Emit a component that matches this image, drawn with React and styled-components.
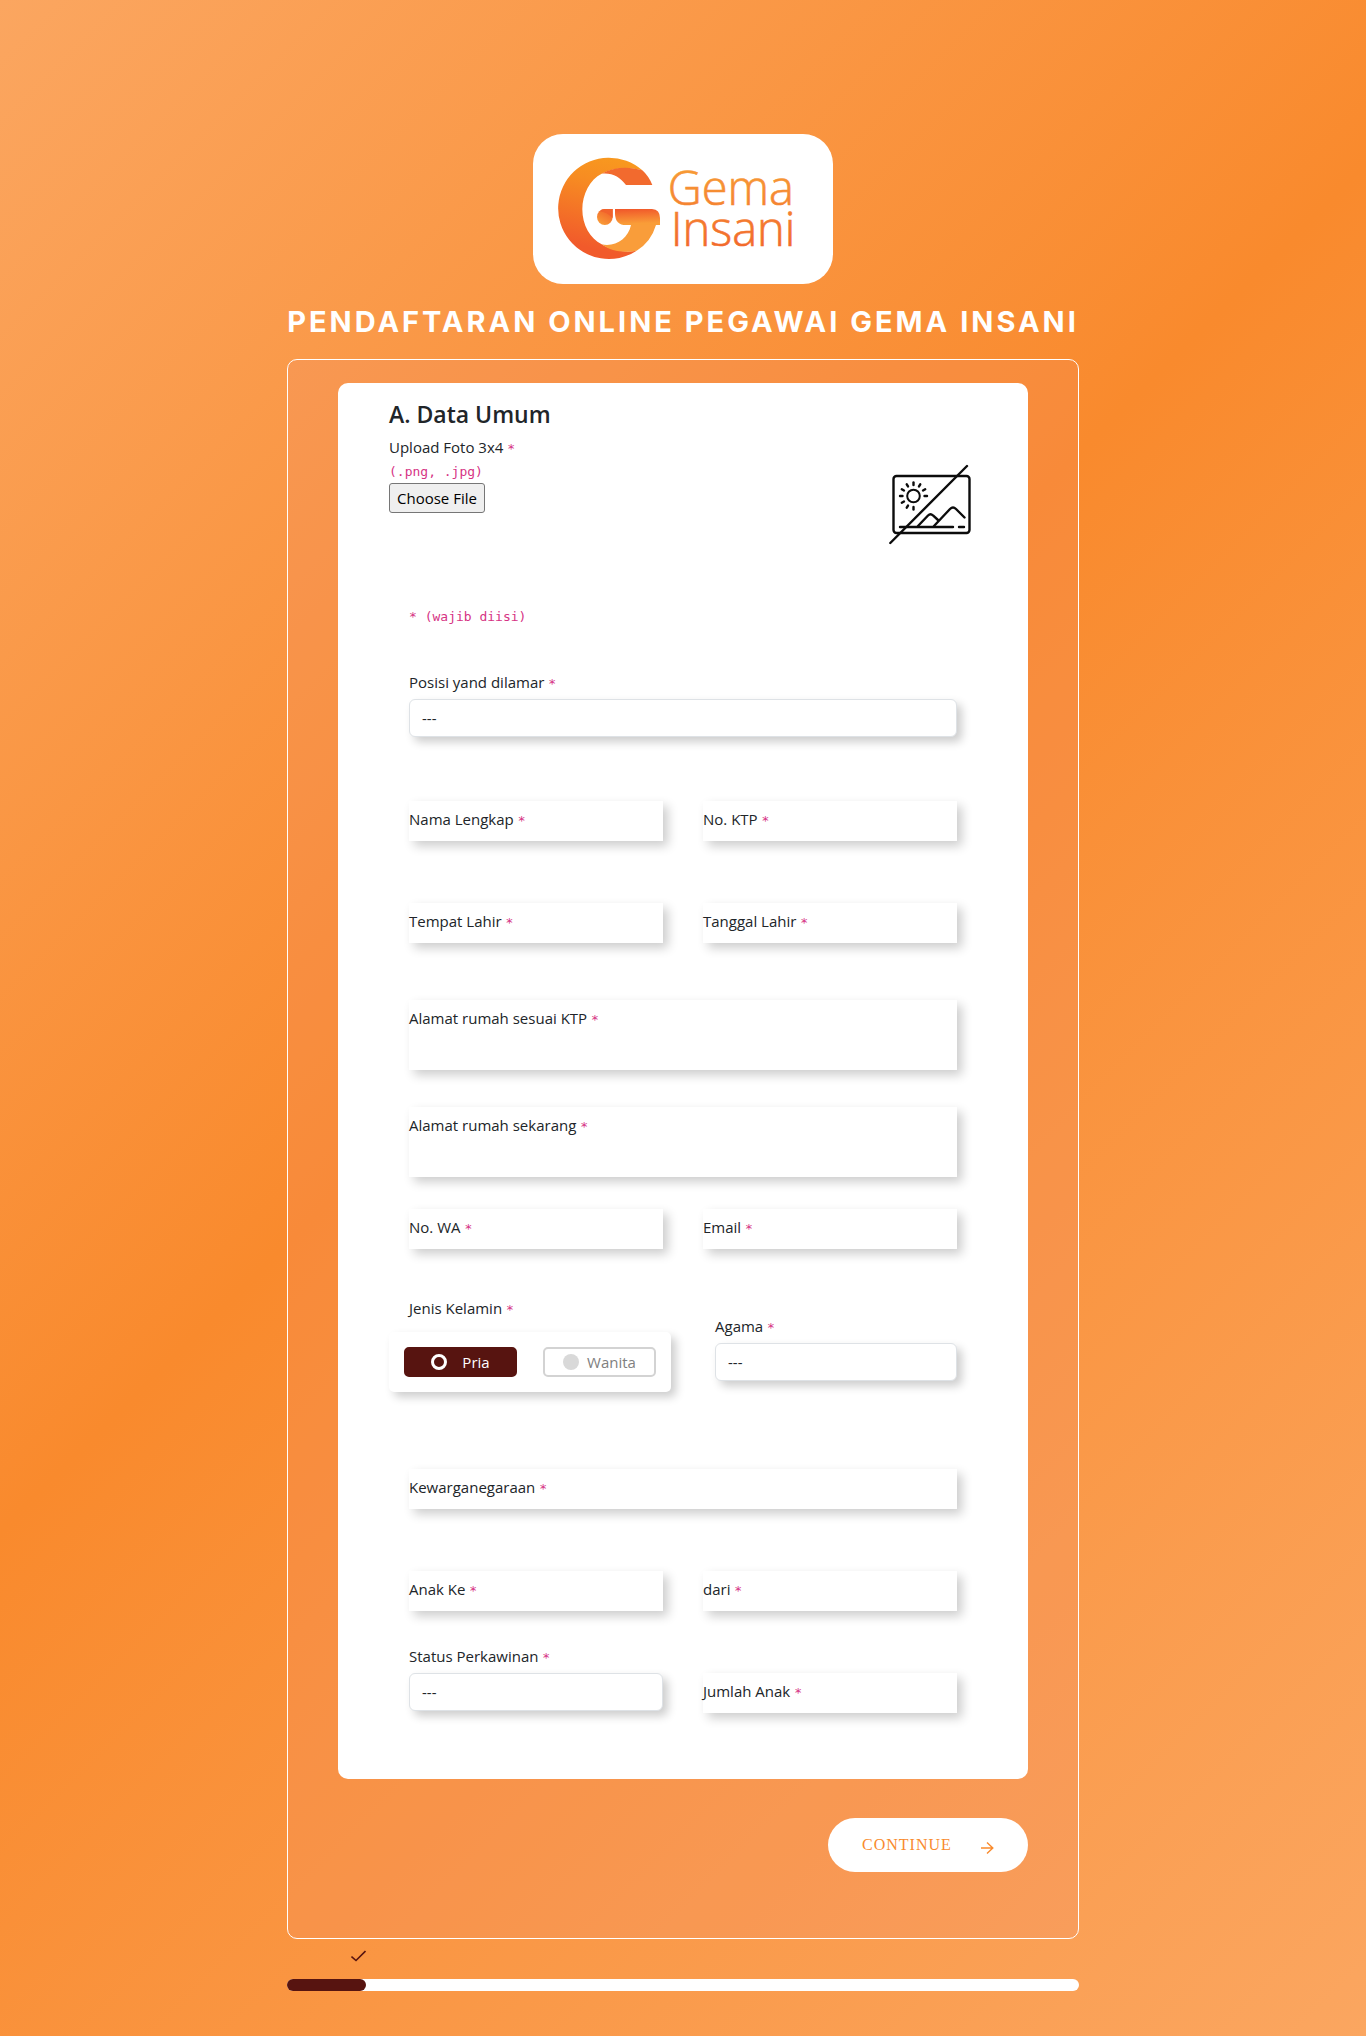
import React, { useId, useState } from "react";
import styled, { createGlobalStyle, css } from "styled-components";

const GlobalStyle = createGlobalStyle`
  *, *::before, *::after { box-sizing: border-box; }
  body {
    margin: 0;
    font-family: "Open Sans", "Noto Sans", sans-serif;
    font-size: 15px;
    line-height: 24px;
    color: #212529;
  }
  h1, h2, p { margin: 0; }
`;

const softShadow = css`
  box-shadow: 5px 5px 10px rgba(0, 0, 0, 0.2);
`;

const Page = styled.div`
  min-height: 100vh;
  display: flex;
  flex-direction: column;
  align-items: center;
  padding: 134px 16px 44px;
  background: linear-gradient(135deg, #fba660 0%, #f98a2d 45%, #fba660 100%);
`;

const LogoPlate = styled.div`
  width: 300px;
  height: 150px;
  border-radius: 30px;
  background: #fff;
  overflow: hidden;

  svg { display: block; }
`;

const Title = styled.h1`
  margin-top: 16px;
  font-family: Inter, "Open Sans", sans-serif;
  font-size: 29px;
  line-height: 44px;
  font-weight: 700;
  letter-spacing: 3px;
  text-align: center;
  color: #fff;
`;

const Container = styled.main`
  width: 100%;
  max-width: 792px;
`;

const Panel = styled.form`
  margin-top: 15px;
  padding: 23px 50px 66px;
  border: 1px solid #fff;
  border-radius: 10px;
  background: rgba(241, 142, 125, 0.15);
`;

const Card = styled.section`
  padding: 15px 51px 66px;
  border-radius: 10px;
  background: #fff;
`;

const CardTitle = styled.h2`
  margin-bottom: 5px;
  font-size: 23px;
  line-height: 32px;
  font-weight: 600;
`;

const Upload = styled.div`
  display: flex;
  justify-content: space-between;
  align-items: flex-start;
`;

const UploadText = styled.div`
  display: flex;
  flex-direction: column;
  align-items: flex-start;
`;

const codeText = css`
  font-family: "DejaVu Sans Mono", monospace;
  font-size: 13px;
  color: #d63384;
`;

const Hint = styled.p`
  ${codeText}
  padding-top: 2px;
  line-height: 22px;
`;

const Required = styled.code`
  ${codeText}
  line-height: 1;
`;

const FileButton = styled.button`
  height: 30px;
  padding: 0 7px;
  border: 1px solid #767676;
  border-radius: 3px;
  background: #efefef;
  color: #000;
  font: inherit;
`;

const Photo = styled.div`
  padding: 29px 6px 0 0;

  svg { display: block; }
`;

const Fields = styled.div`
  padding: 58px 20px 0;
`;

const Row = styled.div`
  display: grid;
  grid-template-columns: ${(p) => (p.$split ? "1fr 1fr" : "1fr")};
  column-gap: 40px;
  align-items: start;
  margin-top: ${(p) => p.$gap}px;
`;

const Stack = styled.div`
  display: grid;
  height: ${(p) => (p.$tall ? 70 : 40)}px;
  margin-top: ${(p) => (p.$level ? 29 : 0)}px;
  background: #fff;
  ${softShadow}

  > * { grid-area: 1 / 1; }
`;

const inputLook = css`
  width: 100%;
  height: 100%;
  padding: 8px 0;
  border: 0;
  background: transparent;
  color: inherit;
  font: inherit;
  resize: none;
  outline: none;
`;

const Input = styled.input`
  ${inputLook}
`;

const TextArea = styled.textarea`
  ${inputLook}
`;

const FloatingLabel = styled.label`
  padding-top: 6px;
  pointer-events: none;
`;

const FieldLabel = styled.label`
  display: block;
  margin-bottom: 5px;
`;

const Select = styled.select`
  display: block;
  width: 100%;
  height: 38px;
  padding: 0 12px;
  border: 1px solid #dee2e6;
  border-radius: 6px;
  background: #fff;
  color: #212529;
  font: inherit;
  appearance: none;
  ${softShadow}
`;

const GenderRow = styled.div`
  display: grid;
  grid-template-columns: 1fr 242px;
  column-gap: 44px;
  margin-top: 47px;
`;

const GenderSet = styled.fieldset`
  min-width: 0;
  margin: 0 0 0 -20px;
  padding: 0;
  border: 0;
`;

const GenderLegend = styled.legend`
  margin-bottom: 12px;
  padding: 0 0 0 20px;
`;

const GenderBox = styled.div`
  display: flex;
  gap: 26px;
  padding: 15px;
  border-radius: 5px;
  background: #fff;
  ${softShadow}
`;

const GenderOption = styled.label`
  display: flex;
  flex: 1;
  align-items: center;
  justify-content: center;
  gap: ${(p) => (p.$on ? 15 : 8)}px;
  height: 30px;
  border: 2px solid ${(p) => (p.$on ? "#571410" : "#d3d3d3")};
  border-radius: 5px;
  background: ${(p) => (p.$on ? "#571410" : "#fff")};
  color: ${(p) => (p.$on ? "#fff" : "#808080")};
  cursor: pointer;
`;

const Radio = styled.input`
  appearance: none;
  width: 16px;
  height: 16px;
  margin: 0;
  border-radius: 50%;
  background: #d9d9d9;

  &:checked {
    border: 3px solid #fff;
    background: #571410;
  }
`;

const Religion = styled.div`
  padding-top: 18px;
`;

const Actions = styled.div`
  display: flex;
  justify-content: flex-end;
  margin-top: 39px;
`;

const Continue = styled.button`
  display: flex;
  align-items: center;
  justify-content: space-between;
  width: 200px;
  height: 54px;
  padding: 0 34px;
  border: 0;
  border-radius: 27px;
  background: #fff;
  color: #f98b2d;
  font-family: "Liberation Serif", serif;
  font-size: 16px;
  line-height: 24px;
  letter-spacing: 1px;

  svg { margin-top: 6px; }
`;

const Progress = styled.div`
  margin-top: 4px;
`;

const ProgressMark = styled.div`
  display: flex;
  justify-content: flex-end;
  width: ${(p) => p.$value}%;
  height: 36px;
  padding-top: 7px;
`;

const Track = styled.div`
  height: 12px;
  border-radius: 6px;
  background: #fff;
`;

const Fill = styled.div`
  width: ${(p) => p.$value}%;
  height: 100%;
  border-radius: 6px;
  background: #571410;
`;

function Logo() {
  return (
    <svg width="300" height="150" viewBox="39 42 900 450" role="img" aria-label="Gema Insani">
      <defs>
        <linearGradient id="ring" x1="0.6" y1="0" x2="0.4" y2="1">
          <stop offset="0" stopColor="#f8981f" />
          <stop offset="0.25" stopColor="#f78c22" />
          <stop offset="0.9" stopColor="#f15a2b" />
        </linearGradient>
        <linearGradient id="bar" x1="0.45" y1="0" x2="0.55" y2="1">
          <stop offset="0" stopColor="#f1592a" />
          <stop offset="0.9" stopColor="#f99d38" />
        </linearGradient>
        <linearGradient id="dot" x1="0.7" y1="0.2" x2="0.3" y2="1">
          <stop offset="0" stopColor="#f26a2c" />
          <stop offset="1" stopColor="#f99d38" />
        </linearGradient>
        <linearGradient id="word" gradientUnits="userSpaceOnUse" x1="0" y1="150" x2="0" y2="380">
          <stop offset="0" stopColor="#f79a35" />
          <stop offset="1" stopColor="#f26a2b" />
        </linearGradient>
      </defs>
      <path
        d="M367 151 A152 152 0 1 0 350 392 C315 398 275 392 245 373 C210 355 187 315 187 268 C187 222 210 178 245 161 C280 143 325 140 367 151Z"
        fill="url(#ring)"
      />
      <path d="M245 161 C280 141 325 138 367 151 Q386 168 397 195 H318 C300 171 278 158 245 161Z" fill="#f26a2e" />
      <path d="M245 373 C285 382 325 356 333 315 H408 Q393 366 350 392 C315 399 275 396 245 373Z" fill="#f99d3a" />
      <path d="M285 267 H396 Q420 269 420 294 V315 H318 Q286 315 285 281Z" fill="url(#bar)" />
      <path d="M278 267 V291 A23.500 24 0 1 1 254.500 267Z" fill="url(#dot)" />
      <path d="M278 267 V294 Q260 276 239 274 Q245 267 255 267Z" fill="#f1622c" />
      <text fill="url(#word)" stroke="url(#word)" strokeWidth="2" fontFamily="Open Sans, sans-serif" fontWeight="300" fontSize="141">
        <tspan x="443" y="256">Gema</tspan>
        <tspan x="452" y="377">Insani</tspan>
      </text>
    </svg>
  );
}

function NoPhotoIcon() {
  const rays = [0, 30, 60, 90, 180, 210, 240, 270, 300, 330];
  return (
    <svg width="82" height="82" viewBox="0 0 82 82" fill="none" stroke="#0c0c0c" strokeWidth="2.400" strokeLinecap="round" role="img" aria-label="Belum ada foto">
      <rect x="4.500" y="12" width="76" height="57" rx="3" />
      <path d="M1.300 79 L78 2" />
      <circle cx="24.500" cy="32" r="6.300" strokeWidth="2" />
      {rays.map((a) => (
        <path key={a} d="M24.500 21 V18.500" transform={`rotate(${a} 24.500 32)`} />
      ))}
      <path d="M11 63 H64 M70 63 H75" />
      <path d="M29 62 L39 51.500 Q41.500 49 44 51.500 L49 56" />
      <path d="M45 62 L61 45 Q64 42 67 45 L75.500 53.500" />
    </svg>
  );
}

const Star = () => <Required>*</Required>;

function TextField({ label, tall, level, type = "text" }) {
  const id = useId();
  return (
    <Stack $tall={tall} $level={level}>
      {tall ? <TextArea id={id} /> : <Input id={id} type={type} />}
      <FloatingLabel htmlFor={id}>
        {label} <Star />
      </FloatingLabel>
    </Stack>
  );
}

function SelectField({ label, options }) {
  const id = useId();
  return (
    <div>
      <FieldLabel htmlFor={id}>
        {label} <Star />
      </FieldLabel>
      <Select id={id} defaultValue="">
        <option value="">---</option>
        {options.map((o) => (
          <option key={o}>{o}</option>
        ))}
      </Select>
    </div>
  );
}

export default function App() {
  const [gender, setGender] = useState("Pria");
  const progress = 10;

  return (
    <Page>
      <GlobalStyle />
      <LogoPlate>
        <Logo />
      </LogoPlate>
      <Title>PENDAFTARAN ONLINE PEGAWAI GEMA INSANI</Title>
      <Container>
        <Panel onSubmit={(e) => e.preventDefault()}>
          <Card>
            <CardTitle>A. Data Umum</CardTitle>
            <Upload>
              <UploadText>
                <label htmlFor="foto">
                  Upload Foto 3x4 <Star />
                </label>
                <Hint>(.png, .jpg)</Hint>
                <FileButton id="foto" type="button">Choose File</FileButton>
              </UploadText>
              <Photo>
                <NoPhotoIcon />
              </Photo>
            </Upload>
            <Fields>
              <Hint>* (wajib diisi)</Hint>
              <Row $gap={42}>
                <SelectField label="Posisi yand dilamar" options={[]} />
              </Row>
              <Row $gap={64} $split>
                <TextField label="Nama Lengkap" />
                <TextField label="No. KTP" />
              </Row>
              <Row $gap={62} $split>
                <TextField label="Tempat Lahir" />
                <TextField label="Tanggal Lahir" />
              </Row>
              <Row $gap={57}>
                <TextField label="Alamat rumah sesuai KTP" tall />
              </Row>
              <Row $gap={37}>
                <TextField label="Alamat rumah sekarang" tall />
              </Row>
              <Row $gap={32} $split>
                <TextField label="No. WA" type="tel" />
                <TextField label="Email" type="email" />
              </Row>
              <GenderRow>
                <GenderSet>
                  <GenderLegend>
                    Jenis Kelamin <Star />
                  </GenderLegend>
                  <GenderBox>
                    {["Pria", "Wanita"].map((g) => (
                      <GenderOption key={g} $on={gender === g}>
                        <Radio type="radio" name="gender" checked={gender === g} onChange={() => setGender(g)} />
                        {g}
                      </GenderOption>
                    ))}
                  </GenderBox>
                </GenderSet>
                <Religion>
                  <SelectField label="Agama" options={[]} />
                </Religion>
              </GenderRow>
              <Row $gap={77}>
                <TextField label="Kewarganegaraan" />
              </Row>
              <Row $gap={62} $split>
                <TextField label="Anak Ke" />
                <TextField label="dari" />
              </Row>
              <Row $gap={33} $split>
                <SelectField label="Status Perkawinan" options={[]} />
                <TextField label="Jumlah Anak" level />
              </Row>
            </Fields>
          </Card>
          <Actions>
            <Continue type="submit">
              CONTINUE
              <svg width="14" height="14" viewBox="0 0 14 14" fill="none" stroke="currentColor" strokeWidth="1.400" aria-hidden="true">
                <path d="M1 7 H13 M7 1.500 L12.800 7 L7 12.500" />
              </svg>
            </Continue>
          </Actions>
        </Panel>
        <Progress>
          <ProgressMark $value={progress}>
            <svg width="15" height="12" viewBox="0 0 15 12" fill="none" stroke="#571410" strokeWidth="1.600" aria-hidden="true">
              <path d="M0.500 6.500 L5 10.500 L14.500 1" />
            </svg>
          </ProgressMark>
          <Track role="progressbar" aria-label="Progres" aria-valuenow={progress} aria-valuemin={0} aria-valuemax={100}>
            <Fill $value={progress} />
          </Track>
        </Progress>
      </Container>
    </Page>
  );
}
